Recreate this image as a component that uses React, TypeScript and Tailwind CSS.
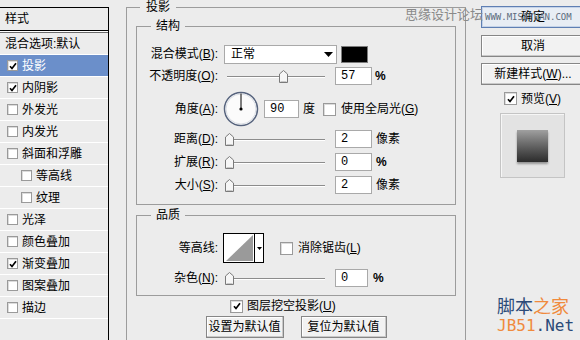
import React from "react";

const styleList = [
  { label: "混合选项:默认", noBox: true },
  { label: "投影", on: true, active: true },
  { label: "内阴影", on: true },
  { label: "外发光" },
  { label: "内发光" },
  { label: "斜面和浮雕" },
  { label: "等高线", sub: true },
  { label: "纹理", sub: true },
  { label: "光泽" },
  { label: "颜色叠加" },
  { label: "渐变叠加", on: true },
  { label: "图案叠加" },
  { label: "描边" },
];

const Check = ({ on, small }: { on?: boolean; small?: boolean }) => (
  <span
    className={`flex shrink-0 items-center justify-center border border-[#9a9a9a] bg-white shadow-[inset_1px_1px_0_#dcdcdc] ${
      small ? "h-[11px] w-[11px]" : "h-[13px] w-[13px]"
    }`}
  >
    {on && (
      <svg width="8" height="8" viewBox="0 0 8 8">
        <path d="M1 4.2 L3 6.5 L7 1.3" fill="none" stroke="#000" strokeWidth="1.7" />
      </svg>
    )}
  </span>
);

// slider with little house-shaped thumb
const Slider = ({ pos, w = 107 }: { pos: number; w?: number }) => (
  <div className="relative h-[20px] shrink-0" style={{ width: w }}>
    <div className="absolute left-[3px] right-[6px] top-[10px] h-[2px] border-t border-[#8c8c8c] border-b border-b-white" />
    <svg className="absolute top-[4px]" style={{ left: pos }} width="9" height="13" viewBox="0 0 9 13">
      <path d="M0.5 4 L4.5 0.5 L8.5 4 V12.5 H0.5 Z" fill="#f6f6f6" stroke="#7a7a7a" />
      <path d="M1.5 11.5 H7.5" stroke="#c8c8c8" />
    </svg>
  </div>
);

const Field = ({ v, w = 37 }: { v: string; w?: number }) => (
  <div
    className="flex h-[18px] shrink-0 items-center border border-[#a9a9a9] bg-white pl-[5px] font-['Liberation_Mono',monospace] text-[12px]"
    style={{ width: w }}
  >
    {v}
  </div>
);

const Label = ({ children, w = 81 }: { children: React.ReactNode; w?: number }) => (
  <span className="shrink-0 whitespace-nowrap text-right" style={{ width: w }}>
    {children}
  </span>
);

const Btn = ({ children, w, primary }: { children: React.ReactNode; w: number; primary?: boolean }) => (
  <div
    className={`flex h-[22px] shrink-0 items-center justify-center border ${
      primary
        ? "border-[#5f7fb3] bg-[#e8edf4] shadow-[inset_0_0_0_1px_#c5d3e8]"
        : "border-[#868686] bg-[#f2f2f2] shadow-[inset_-1px_-1px_0_#c9c9c9,inset_1px_1px_0_#ffffff]"
    }`}
    style={{ width: w }}
  >
    {children}
  </div>
);

export default function App() {
  return (
    <div className="relative flex h-[340px] w-[580px] overflow-hidden bg-[#ececec] font-['Liberation_Sans','Noto_Sans_CJK_SC',sans-serif] text-[12px] leading-[14px] text-black">
      {/* styles list */}
      <div className="mt-[7px] h-[340px] w-[109px] shrink-0 border-t border-r border-black">
        <div className="flex h-[23px] items-center border-b border-black pl-[5px]">样式</div>
        <div className="h-[2px] border-b border-[#6a6a6a] bg-white" />
        {styleList.map((s, i) => (
          <div
            key={i}
            className={`flex h-[22px] items-center border-b border-white ${
              s.active ? "bg-[#6b8fca] text-white" : ""
            } ${s.noBox ? "pl-[5px]" : s.sub ? "pl-[21px]" : "pl-[7px]"}`}
          >
            {!s.noBox && <Check on={s.on} small />}
            <span className={s.noBox ? "" : "ml-[4px]"}>{s.label}</span>
          </div>
        ))}
      </div>

      {/* main settings */}
      <div className="ml-[17px] w-[340px] shrink-0">
        <fieldset className="h-[360px] border border-[#9c9c9c] px-[9px]">
          <legend className="ml-[4px] px-[6px] leading-[14px]">投影</legend>

          <fieldset className="mt-[5px] border border-[#9c9c9c] pt-[11px] pb-[9px]">
            <legend className="ml-[14px] px-[5px] leading-[14px]">结构</legend>

            <div className="flex h-[20px] items-center">
              <Label>
                混合模式(<u>B</u>):
              </Label>
              <div className="ml-[6px] flex h-[19px] w-[113px] items-center justify-between border border-[#a9a9a9] bg-white pl-[6px] pr-[3px]">
                <span>正常</span>
                <svg width="9" height="5" viewBox="0 0 9 5">
                  <path d="M0 0 H9 L4.5 5 Z" fill="#000" />
                </svg>
              </div>
              <div className="ml-[4px] h-[17px] w-[27px] border border-[#7c7c7c] bg-black" />
            </div>

            <div className="mt-[2px] flex h-[20px] items-center">
              <Label>
                不透明度(<u>O</u>):
              </Label>
              <div className="ml-[6px]">
                <Slider pos={55} />
              </div>
              <div className="ml-[4px]">
                <Field v="57" />
              </div>
              <span className="ml-[3px] font-bold">%</span>
            </div>

            <div className="mt-[5px] flex h-[36px] items-center">
              <Label>
                角度(<u>A</u>):
              </Label>
              <svg className="ml-[5px] shrink-0" width="36" height="36" viewBox="0 0 36 36">
                <circle cx="18" cy="18" r="16.5" fill="#fbfbfb" stroke="#56637d" strokeWidth="1.5" />
                <circle cx="18" cy="18" r="15" fill="none" stroke="#d9dde4" strokeWidth="1" />
                <path d="M18 18 V2.5" stroke="#000" strokeWidth="1" />
                <circle cx="18" cy="18" r="1.6" fill="#000" />
              </svg>
              <div className="ml-[5px]">
                <Field v="90" w={35} />
              </div>
              <span className="ml-[4px]">度</span>
              <span className="ml-[8px]">
                <Check />
              </span>
              <span className="ml-[5px]">
                使用全局光(<u>G</u>)
              </span>
            </div>

            {[
              { l: "距离", k: "D", v: "2", u: "像素" },
              { l: "扩展", k: "R", v: "0", u: "%" },
              { l: "大小", k: "S", v: "2", u: "像素" },
            ].map((r, i) => (
              <div key={r.l} className={`flex h-[20px] items-center ${i === 0 ? "mt-[2px]" : "mt-[3px]"}`}>
                <Label>
                  {r.l}(<u>{r.k}</u>):
                </Label>
                <div className="ml-[6px]">
                  <Slider pos={1} />
                </div>
                <div className="ml-[4px]">
                  <Field v={r.v} />
                </div>
                <span className={`ml-[4px] ${r.u === "%" ? "font-bold" : ""}`}>{r.u}</span>
              </div>
            ))}
          </fieldset>

          <fieldset className="mt-[3px] border border-[#9c9c9c] pt-[11px] pb-[7px]">
            <legend className="ml-[14px] px-[5px] leading-[14px]">品质</legend>

            <div className="flex h-[30px] items-center">
              <Label>等高线:</Label>
              <div className="ml-[5px] flex h-[30px] w-[41px] shrink-0 border border-black bg-white">
                <svg width="30" height="28" viewBox="0 0 30 28">
                  <path d="M2 27 L29 1 V27 Z" fill="#9a9a9a" />
                </svg>
                <div className="flex flex-1 items-center justify-center border-l border-black">
                  <svg width="5" height="3" viewBox="0 0 5 3">
                    <path d="M0 0 H5 L2.5 3 Z" fill="#000" />
                  </svg>
                </div>
              </div>
              <span className="ml-[16px]">
                <Check />
              </span>
              <span className="ml-[5px]">
                消除锯齿(<u>L</u>)
              </span>
            </div>

            <div className="mt-[5px] flex h-[20px] items-center">
              <Label>
                杂色(<u>N</u>):
              </Label>
              <div className="ml-[6px]">
                <Slider pos={1} />
              </div>
              <div className="ml-[4px]">
                <Field v="0" w={33} />
              </div>
              <span className="ml-[5px] font-bold">%</span>
            </div>
          </fieldset>

          <div className="mt-[3px] flex h-[14px] items-center pl-[94px]">
            <Check on />
            <span className="ml-[4px]">
              图层挖空投影(<u>U</u>)
            </span>
          </div>

          <div className="mt-[3px] flex justify-center gap-[17px]">
            <Btn w={78}>设置为默认值</Btn>
            <Btn w={86}>复位为默认值</Btn>
          </div>
        </fieldset>
      </div>

      {/* buttons + preview */}
      <div className="ml-[15px] mt-[6px] flex w-[104px] shrink-0 flex-col">
        <Btn w={104} primary>
          确定
        </Btn>
        <div className="mt-[7px]">
          <Btn w={104}>取消</Btn>
        </div>
        <div className="mt-[6px]">
          <Btn w={104}>
            新建样式(<u>W</u>)...
          </Btn>
        </div>
        <div className="mt-[7px] flex h-[13px] items-center pl-[23px]">
          <Check on />
          <span className="ml-[4px]">
            预览(<u>V</u>)
          </span>
        </div>
        <div className="ml-[19px] mt-[8px] flex h-[65px] w-[65px] items-center justify-center border border-[#c4c4c4] bg-[#e3e3e3] shadow-[inset_1px_1px_0_#f6f6f6]">
          <div className="h-[32px] w-[31px] bg-gradient-to-b from-[#a0a0a0] to-[#2c2c2c] shadow-[0_2px_2px_rgba(0,0,0,0.35)]" />
        </div>
      </div>

      {/* watermarks */}
      <span className="absolute left-[405px] top-[6px] font-['Noto_Sans_CJK_SC',sans-serif] text-[13px] leading-[16px] text-[#8a8a8a]">
        思缘设计论坛
      </span>
      <span className="absolute left-[485px] top-[12px] font-['DejaVu_Sans_Mono',monospace] text-[9px] leading-[11px] text-[#5b6b7c]">
        WWW.MISSYUAN.COM
      </span>
      <div className="absolute left-[497px] top-[294px] flex flex-col">
        <span className="font-['Noto_Sans_CJK_SC',sans-serif] text-[18px] leading-[22px]">
          <span className="text-[#2b4a78]">脚本</span>
          <span className="text-[#f08a3c]">之家</span>
        </span>
        <span className="font-['DejaVu_Sans_Mono',monospace] text-[16px] leading-[20px]">
          <span className="text-[#f08a3c]">JB51</span>
          <span className="text-[#2b4a78]">.Net</span>
        </span>
      </div>
    </div>
  );
}
